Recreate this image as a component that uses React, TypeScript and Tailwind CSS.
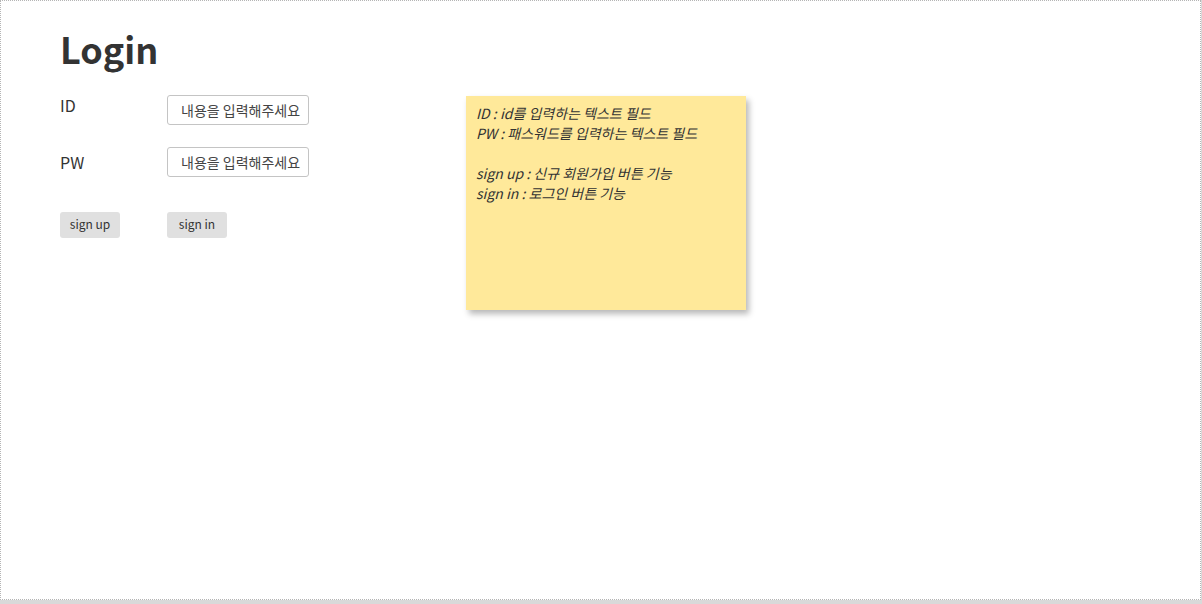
import React from "react";

const font = { fontFamily: '"Noto Sans CJK KR", "Noto Sans", sans-serif' };

export default function App() {
  return (
    <div className="w-[1202px] h-[604px] bg-[#d9d9d9] overflow-hidden" style={font}>
      <div className="w-[1201px] h-[600px] bg-white border border-dotted border-[#b5b5b5] flex">
        <div className="w-[464px] pl-[59px] pt-[23px] shrink-0">
          <h1 className="text-[36px] font-bold text-[#333] leading-[48px]">Login</h1>
          <div className="mt-[23px] flex items-start">
            <span className="w-[107px] text-[16px] text-[#333] leading-[20px] mt-[0px]">ID</span>
            <input
              className="w-[142px] h-[30px] border border-[#c4c4c4] rounded-[3px] pl-[13px] pr-[2px] text-[14px] text-[#444] placeholder:text-[#444] outline-none"
              placeholder="내용을 입력해주세요"
            />
          </div>
          <div className="mt-[22px] flex items-start">
            <span className="w-[107px] text-[16px] text-[#333] leading-[20px] mt-[5px]">PW</span>
            <input
              className="w-[142px] h-[30px] border border-[#c4c4c4] rounded-[3px] pl-[13px] pr-[2px] text-[14px] text-[#444] placeholder:text-[#444] outline-none"
              placeholder="내용을 입력해주세요"
            />
          </div>
          <div className="mt-[35px] flex">
            <button className="w-[60px] h-[26px] bg-[#e0e0e0] rounded-[3px] text-[12px] text-[#333] leading-[16px] pb-[2px]">sign up</button>
            <button className="ml-[47px] w-[60px] h-[26px] bg-[#e0e0e0] rounded-[3px] text-[12px] text-[#333] leading-[16px] pb-[2px]">sign in</button>
          </div>
        </div>
        <div className="mt-[95px] ml-[1px] w-[280px] h-[214px] bg-[#ffe99a] shadow-[3px_4px_6px_rgba(0,0,0,0.28)] px-[10px] pt-[7px] italic text-[14px] leading-[20px] text-[#333]">
          <p>ID : id를 입력하는 텍스트 필드</p>
          <p>PW : 패스워드를 입력하는 텍스트 필드</p>
          <p>&nbsp;</p>
          <p>sign up : 신규 회원가입 버튼 기능</p>
          <p>sign in : 로그인 버튼 기능</p>
        </div>
      </div>
    </div>
  );
}
